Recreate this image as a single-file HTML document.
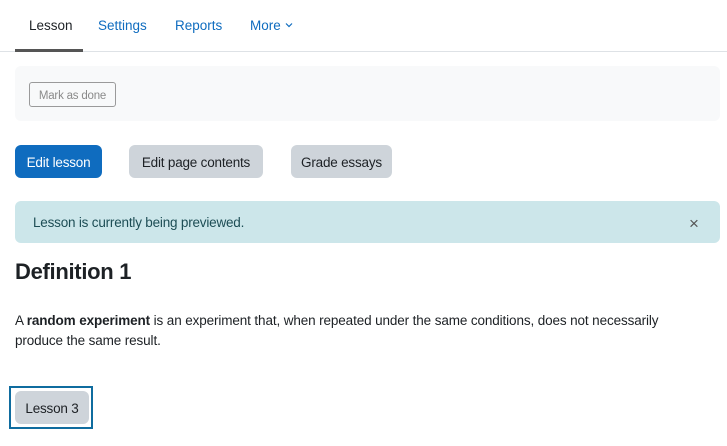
<!DOCTYPE html>
<html><head><style>
body{margin:0;width:727px;height:446px;background:#fff;font-family:"Liberation Sans",sans-serif;color:#1d2125;position:relative;overflow:hidden}
.a{position:absolute;white-space:nowrap}
.btn{position:absolute;border-radius:6px;font-size:13.5px;display:flex;align-items:center;justify-content:center;letter-spacing:-0.2px;padding-top:2px;box-sizing:border-box}
</style></head><body>
<div class="a" style="left:29px;top:18px;font-size:13.5px;color:#1d2125">Lesson</div>
<div class="a" style="left:98px;top:18px;font-size:13.5px;color:#0f6cbf">Settings</div>
<div class="a" style="left:175px;top:18px;font-size:13.5px;color:#0f6cbf">Reports</div>
<div class="a" style="left:250px;top:18px;font-size:13.5px;color:#0f6cbf">More <svg width="8" height="6" viewBox="0 0 8 6" style="vertical-align:2px"><path d="M1 1.5L4 4.5L7 1.5" fill="none" stroke="#0f6cbf" stroke-width="1.2"/></svg></div>
<div class="a" style="left:0;top:51px;width:727px;height:1px;background:#dee2e6"></div>
<div class="a" style="left:15px;top:49px;width:68px;height:3px;background:#555"></div>
<div class="a" style="left:15px;top:66px;width:705px;height:55px;background:#f8f9fa;border-radius:6px"></div>
<div class="btn" style="left:29px;top:82px;width:87px;height:25px;border:1px solid #9a9a9a;border-radius:3px;font-size:11.5px;color:#8a8a8a">Mark as done</div>
<div class="btn" style="left:15px;top:145px;width:87px;height:33px;background:#0f6cbf;color:#fff">Edit lesson</div>
<div class="btn" style="left:129px;top:145px;width:134px;height:33px;background:#ced4da">Edit page contents</div>
<div class="btn" style="left:291px;top:145px;width:101px;height:33px;background:#ced4da">Grade essays</div>
<div class="a" style="left:15px;top:201px;width:705px;height:42px;background:#cce6ea;border-radius:6px"></div>
<div class="a" style="left:33px;top:215px;font-size:13.5px;color:#1d4d55;letter-spacing:-0.2px">Lesson is currently being previewed.</div>
<div class="a" style="left:689px;top:214px;font-size:17px;color:#555">×</div>
<div class="a" style="left:15px;top:259px;font-size:22px;font-weight:bold;letter-spacing:-0.3px">Definition 1</div>
<div class="a" style="left:15px;top:311px;font-size:13.5px;line-height:20px;letter-spacing:-0.12px">A <b>random experiment</b> is an experiment that, when repeated under the same conditions, does not necessarily<br>produce the same result.</div>
<div class="a" style="left:9px;top:386px;width:80px;height:39px;border:2px solid #0f6c9f"></div>
<div class="btn" style="left:15px;top:391px;width:74px;height:33px;background:#ced4da">Lesson 3</div>
</body></html>
